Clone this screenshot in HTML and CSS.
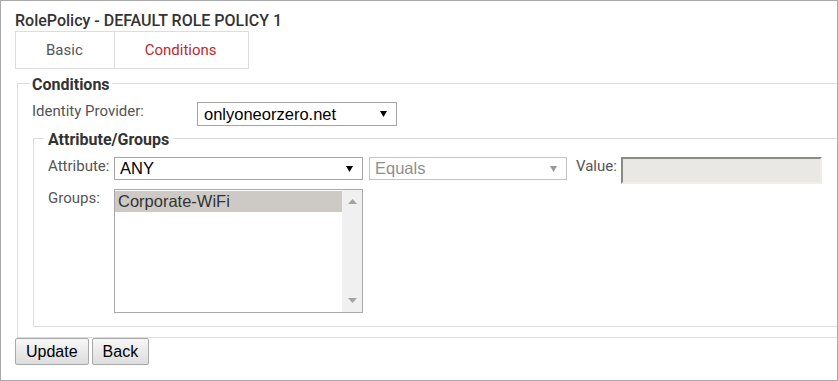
FILE: index.html
```html
<!DOCTYPE html>
<html lang="en">
<head>
    <meta charset="UTF-8">
    <title>RolePolicy - DEFAULT ROLE POLICY 1</title>
    <link rel="stylesheet" href="styles.css">
</head>
<body>
    <div class="page">
        <h1 class="page-title">RolePolicy - DEFAULT ROLE POLICY 1</h1>

        <!-- tabs -->
        <div class="tabs">
            <div class="tab">Basic</div>
            <div class="tab active">Conditions</div>
        </div>

        <fieldset class="box">
            <legend>Conditions</legend>
            <div class="row">
                <span class="label label-wide">Identity Provider:</span>
                <div class="select select-idp">
                    <span>onlyoneorzero.net</span>
                    <svg class="arrow" width="7" height="6" viewBox="0 0 7 6"><polygon points="0,0 7,0 3.5,6" fill="#000"/></svg>
                </div>
            </div>

            <fieldset class="box inner">
                <legend>Attribute/Groups</legend>
                <div class="row">
                    <span class="label">Attribute:</span>
                    <div class="select select-attr">
                        <span>ANY</span>
                        <svg class="arrow" width="7" height="6" viewBox="0 0 7 6"><polygon points="0,0 7,0 3.5,6" fill="#000"/></svg>
                    </div>
                    <div class="select select-op disabled">
                        <span>Equals</span>
                        <svg class="arrow" width="7" height="6" viewBox="0 0 7 6"><polygon points="0,0 7,0 3.5,6" fill="#999"/></svg>
                    </div>
                    <span class="label label-value">Value:</span>
                    <div class="value-input"></div>
                </div>
                <div class="row row-groups">
                    <span class="label">Groups:</span>
                    <div class="listbox">
                        <div class="options">
                            <div class="option selected">Corporate-WiFi</div>
                        </div>
                        <div class="scrollbar">
                            <svg width="9" height="5" viewBox="0 0 9 5"><polygon points="0,5 9,5 4.5,0" fill="#a3a3a3"/></svg>
                            <svg width="9" height="5" viewBox="0 0 9 5"><polygon points="0,0 9,0 4.5,5" fill="#a3a3a3"/></svg>
                        </div>
                    </div>
                </div>
            </fieldset>
        </fieldset>

        <div class="buttons">
            <button class="btn">Update</button>
            <button class="btn">Back</button>
        </div>
    </div>
</body>
</html>
```

FILE: styles.css
```css
body {
    margin: 0;
    padding: 0;
    font-family: Roboto, Arial, sans-serif;
    background: #fff;
}
.page {
    width: 838px;
    height: 381px;
    box-sizing: border-box;
    border: 1px solid #a9a9a9;
    padding: 10px 0 0 14px;
    overflow: hidden;
}
.page-title {
    margin: 0;
    font-size: 16px;
    font-weight: 500;
    line-height: 20px;
    color: #333;
}
.tabs {
    display: flex;
}
.tab {
    height: 36px;
    line-height: 36px;
    padding: 0 31px 0 30px;
    font-size: 15px;
    color: #555;
    border: 1px solid #ddd;
}
.tab + .tab {
    border-left: none;
}
.tab.active {
    color: #c1272d;
}

/* fieldsets */
.box {
    width: 900px;
    margin: 2px 2px 0;
    padding: 0 0 10px 12px;
    border: 1px solid #ddd;
    min-width: 0;
}
.box legend {
    padding: 4px 2px 0;
    font-size: 16px;
    font-weight: bold;
    line-height: 20px;
    color: #333;
}
.box.inner {
    margin: 0 0 0 3px;
    padding: 0 0 13px 10px;
}
.box.inner legend {
    padding: 4px 4px 0;
}
.row {
    display: flex;
    align-items: flex-start;
    padding-left: 2px;
    margin-top: 7px;
}
.inner .row {
    padding-left: 4px;
}
.inner .row-groups {
    margin-top: 5px;
}
.label {
    width: 66px;
    font-size: 15px;
    line-height: 18px;
    color: #555;
}
.label-wide {
    width: 165px;
}
.label-value {
    width: auto;
    margin: 0 4px 0 9px;
}

/* fake select boxes */
.select {
    display: flex;
    align-items: center;
    justify-content: space-between;
    box-sizing: border-box;
    height: 24px;
    padding: 0 9px 0 6px;
    border: 1px solid #a6a6a6;
    font-family: "Liberation Sans", Arial, sans-serif;
    font-size: 16.5px;
    color: #000;
    background: #fff;
}
.select-idp {
    width: 200px;
}
.select-attr {
    width: 249px;
    height: 23px;
    padding-left: 5px;
}
.select-op {
    width: 198px;
    height: 23px;
    margin-left: 6px;
    padding-left: 5px;
}
.select.disabled {
    color: #8f8f8f;
    border-color: #c4c4c4;
}
.value-input {
    box-sizing: border-box;
    width: 201px;
    height: 27px;
    border: 2px solid;
    border-color: #8c8a85 #efeeea #efeeea #8c8a85;
    background: #e9e8e4;
}

/* listbox */
.listbox {
    display: flex;
    box-sizing: border-box;
    width: 249px;
    height: 124px;
    border: 1px solid #a9a9a9;
}
.options {
    flex: 1;
    padding-top: 1px;
}
.option {
    height: 21px;
    line-height: 21px;
    padding-left: 3px;
    font-family: "Liberation Sans", Arial, sans-serif;
    font-size: 16.5px;
    color: #333;
}
.option.selected {
    background: #cdcac5;
}
.scrollbar {
    width: 20px;
    background: #f0f0f0;
    display: flex;
    flex-direction: column;
    justify-content: space-between;
    align-items: center;
    padding: 9px 0 9px;
    box-sizing: border-box;
}

.buttons {
    display: flex;
    gap: 3px;
    margin-top: 0;
}
.btn {
    height: 27px;
    padding: 0 10px;
    font-family: "Liberation Sans", Arial, sans-serif;
    font-size: 16px;
    color: #000;
    border: 1px solid #a8a8a8;
    border-radius: 2px;
    background: linear-gradient(#f7f7f7, #dddddd);
    cursor: pointer;
}
.btn:hover {
    background: linear-gradient(#ffffff, #e6e6e6);
}
```
